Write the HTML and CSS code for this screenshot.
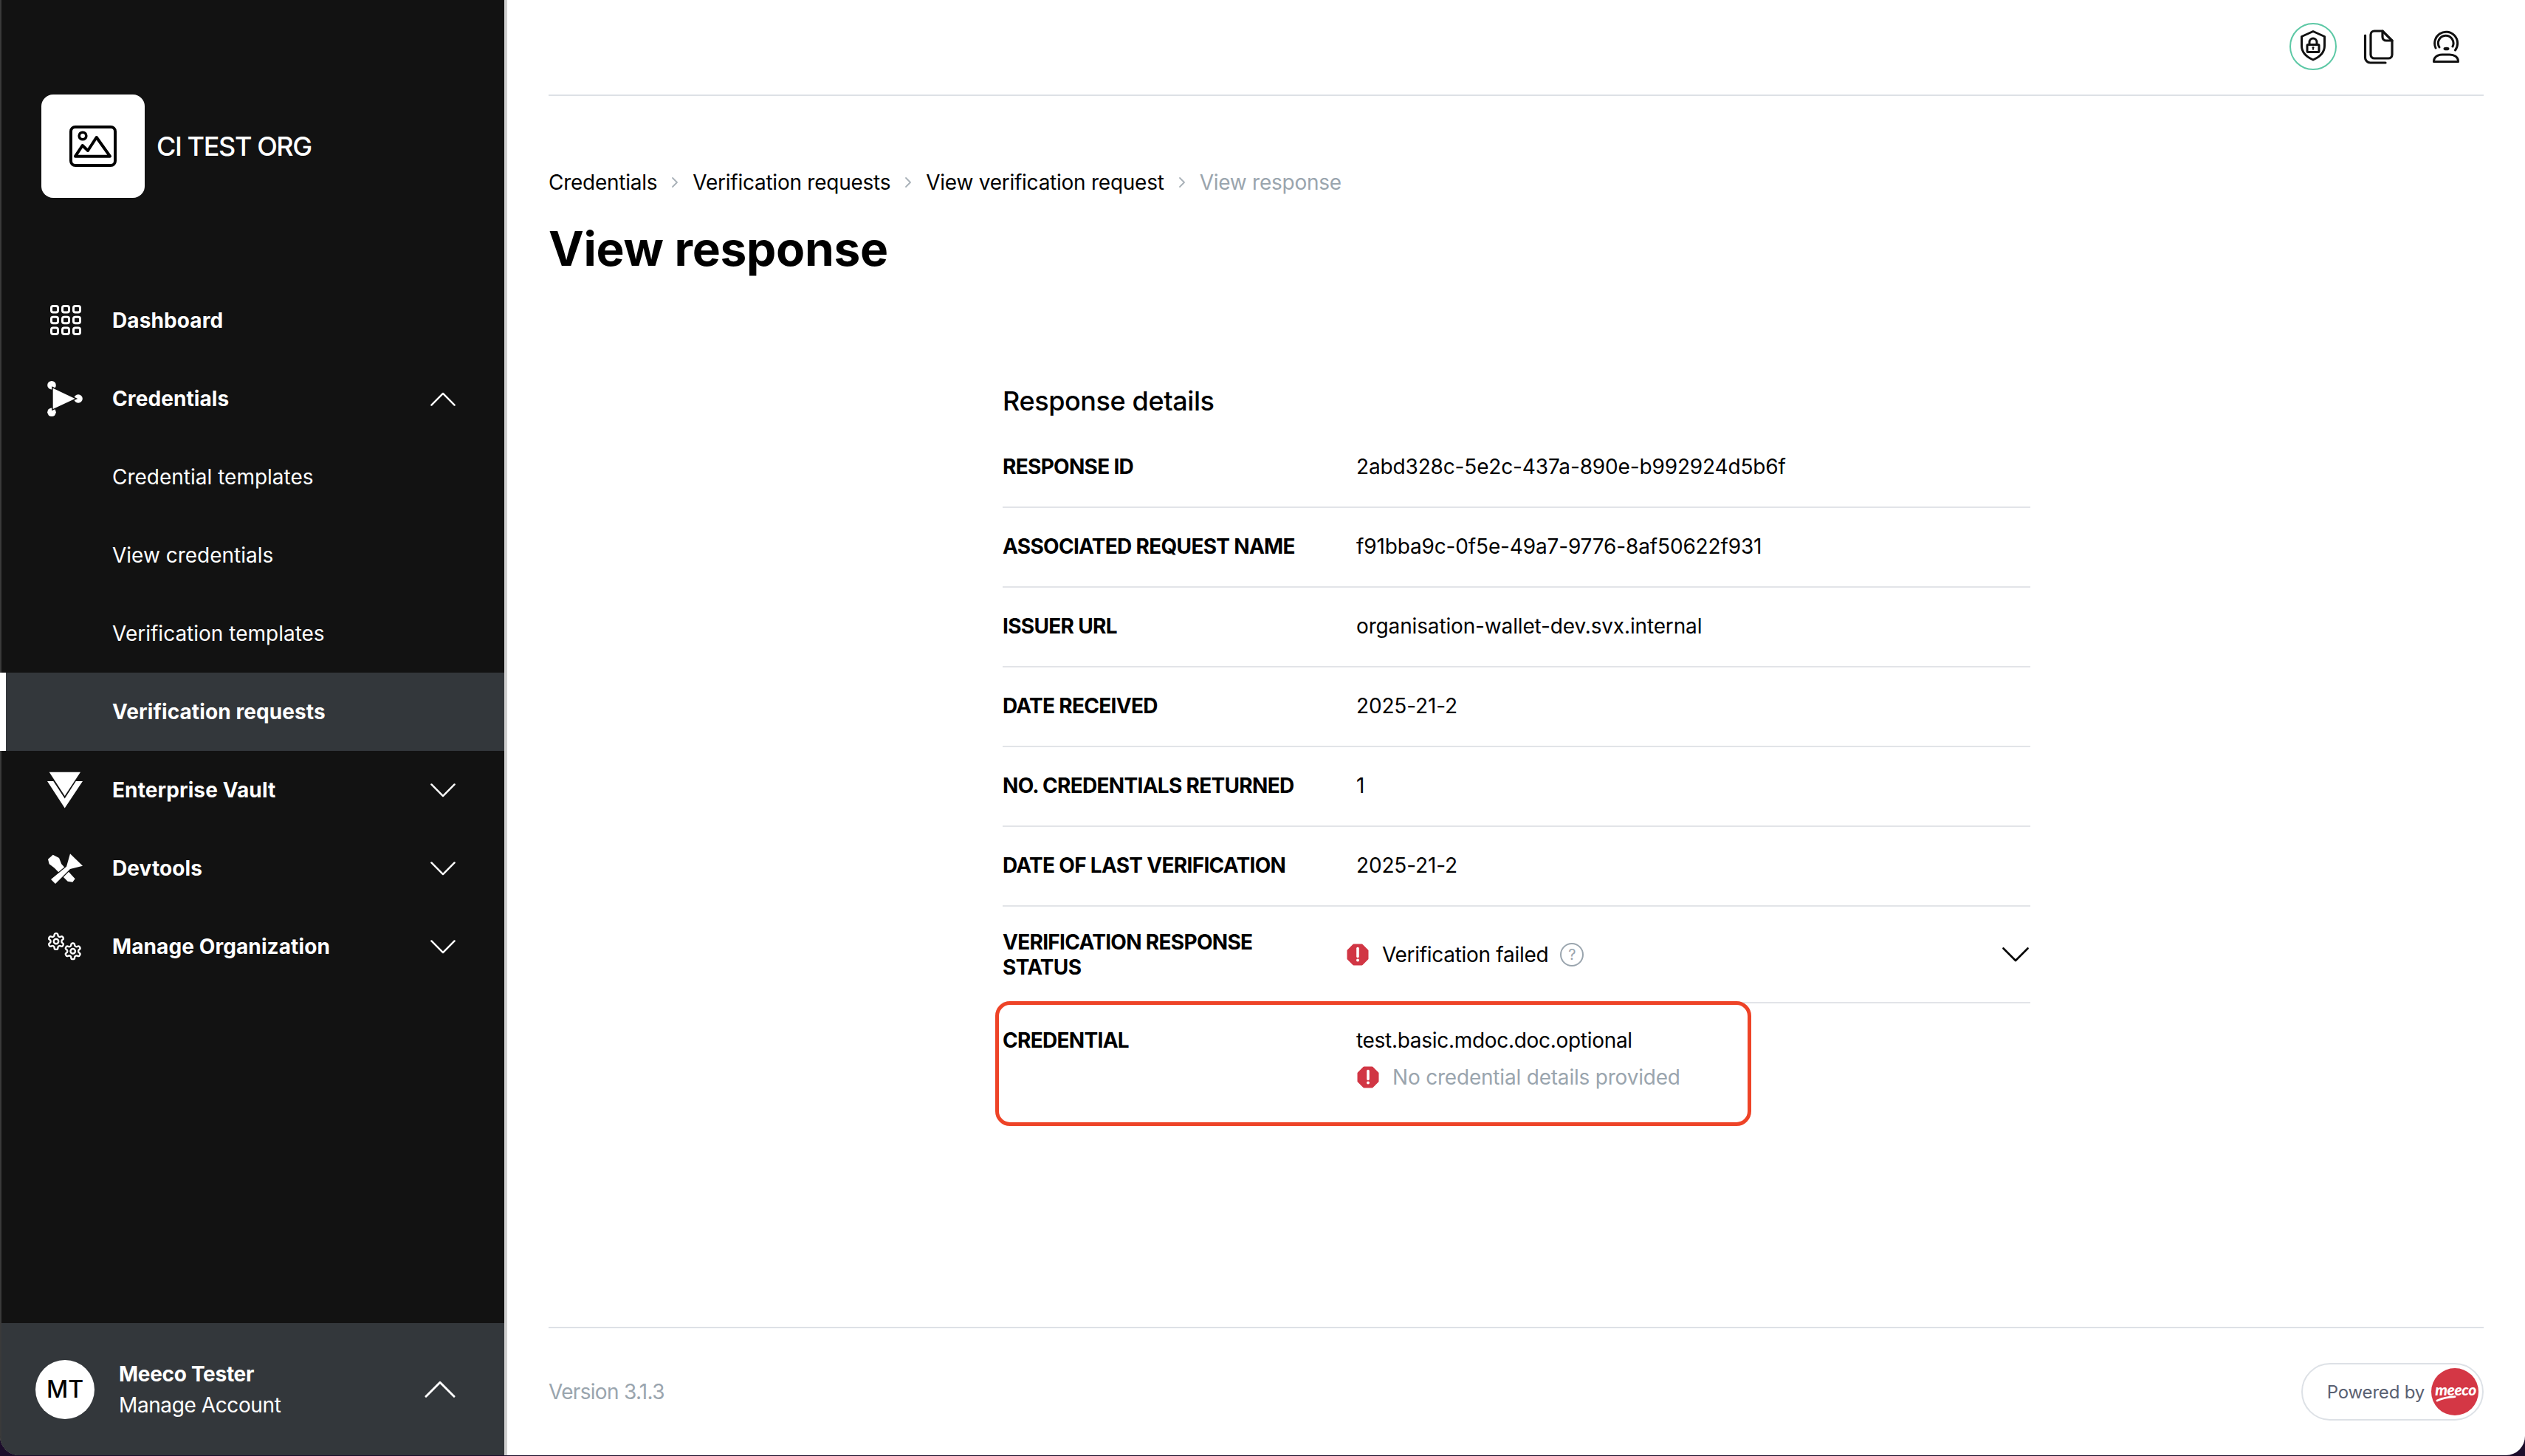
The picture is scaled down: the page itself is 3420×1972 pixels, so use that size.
FILE: index.html
```html
<!DOCTYPE html>
<html lang="en">
<head>
<meta charset="utf-8">
<title>View response</title>
<link rel="stylesheet" href="styles.css">
</head>
<body>
<svg class="defs" width="0" height="0" aria-hidden="true">
  <symbol id="chev-down" viewBox="0 0 36 20"><path d="M1.500 1.500 18 18 34.500 1.500" fill="none" stroke="currentColor" stroke-width="2.600" stroke-linecap="round" stroke-linejoin="round"/></symbol>
  <symbol id="chev-up" viewBox="0 0 36 20"><path d="M1.500 18.500 18 2 34.500 18.500" fill="none" stroke="currentColor" stroke-width="2.600" stroke-linecap="round" stroke-linejoin="round"/></symbol>
  <symbol id="crumb-chev" viewBox="0 0 10 16"><path d="M2 2 8 8 2 14" fill="none" stroke="currentColor" stroke-width="1.800" stroke-linecap="round" stroke-linejoin="round"/></symbol>
  <symbol id="err" viewBox="0 0 30 30"><path d="M9.500 2h11L28 9.500v11L20.500 28h-11L2 20.500v-11z" fill="#d13644" stroke="#d13644" stroke-width="3" stroke-linejoin="round"/><path d="M15 6.500v11" stroke="#fff" stroke-width="3.600" stroke-linecap="round"/><circle cx="15" cy="22.500" r="2" fill="#fff"/></symbol>
  <symbol id="gear" viewBox="0 0 24 24"><path d="M12.220 2h-.44a2 2 0 0 0-2 2v.18a2 2 0 0 1-1 1.730l-.43.250a2 2 0 0 1-2 0l-.15-.08a2 2 0 0 0-2.730.730l-.22.380a2 2 0 0 0 .73 2.730l.15.100a2 2 0 0 1 1 1.720v.510a2 2 0 0 1-1 1.740l-.15.090a2 2 0 0 0-.73 2.730l.22.380a2 2 0 0 0 2.730.730l.15-.08a2 2 0 0 1 2 0l.43.250a2 2 0 0 1 1 1.730V20a2 2 0 0 0 2 2h.44a2 2 0 0 0 2-2v-.18a2 2 0 0 1 1-1.730l.43-.25a2 2 0 0 1 2 0l.15.08a2 2 0 0 0 2.730-.73l.22-.39a2 2 0 0 0-.73-2.730l-.15-.08a2 2 0 0 1-1-1.740v-.5a2 2 0 0 1 1-1.740l.15-.09a2 2 0 0 0 .73-2.730l-.22-.38a2 2 0 0 0-2.730-.73l-.15.08a2 2 0 0 1-2 0l-.43-.25a2 2 0 0 1-1-1.730V4a2 2 0 0 0-2-2z" fill="none" stroke="currentColor" stroke-width="2.200"/><circle cx="12" cy="12" r="3" fill="none" stroke="currentColor" stroke-width="2.200"/></symbol>
</svg>

<div class="window">
  <aside class="sidebar">
    <div class="org">
      <div class="org-logo">
        <svg class="org-icon" viewBox="0 0 64 56"><rect x="2" y="2" width="60" height="52" rx="6" fill="none" stroke="#000" stroke-width="4"/><circle cx="18" cy="14" r="4.800" fill="none" stroke="#000" stroke-width="3.600"/><path d="M8 41.700 17.700 27 25 34 36.700 16 55 41.700z" fill="none" stroke="#000" stroke-width="4" stroke-linejoin="round"/></svg>
      </div>
      <span class="org-name">CI TEST ORG</span>
    </div>

    <nav class="nav">
      <a class="nav-row">
        <span class="nav-icon"><svg class="icon-grid" width="44" height="44" viewBox="0 0 44 44" fill="none" stroke="#fff" stroke-width="3"><rect x="2.500" y="2.500" width="9" height="8.500" rx="2.500"/><rect x="17.500" y="2.500" width="9" height="8.500" rx="2.500"/><rect x="32.500" y="2.500" width="9" height="8.500" rx="2.500"/><rect x="2.500" y="17.300" width="9" height="8.500" rx="2.500"/><rect x="17.500" y="17.300" width="9" height="8.500" rx="2.500"/><rect x="32.500" y="17.300" width="9" height="8.500" rx="2.500"/><rect x="2.500" y="32" width="9" height="8.500" rx="2.500"/><rect x="17.500" y="32" width="9" height="8.500" rx="2.500"/><rect x="32.500" y="32" width="9" height="8.500" rx="2.500"/></svg></span>
        <span class="nav-label strong">Dashboard</span>
      </a>
      <a class="nav-row">
        <span class="nav-icon"><svg width="48" height="50" viewBox="0 0 48 50"><circle cx="6" cy="6.700" r="5.800" fill="#fff"/><circle cx="42" cy="25" r="5.800" fill="#fff"/><circle cx="6" cy="43.300" r="5.800" fill="#fff"/><path d="M7.700 10.700 37.700 25 7.700 39z" fill="#fff" stroke="#121212" stroke-width="3" paint-order="stroke"/></svg></span>
        <span class="nav-label strong">Credentials</span>
        <svg class="nav-chev"><use href="#chev-up"/></svg>
      </a>
      <a class="nav-row"><span class="nav-icon"></span><span class="nav-label">Credential templates</span></a>
      <a class="nav-row"><span class="nav-icon"></span><span class="nav-label">View credentials</span></a>
      <a class="nav-row"><span class="nav-icon"></span><span class="nav-label">Verification templates</span></a>
      <a class="nav-row active"><span class="nav-icon"></span><span class="nav-label strong">Verification requests</span></a>
      <a class="nav-row">
        <span class="nav-icon"><svg width="48" height="50" viewBox="0 0 48 50" fill="#fff"><path d="M2.700.7H45L23.700 33z"/><path d="M0 13H8.300L23.700 36.500 38.800 13H48L23.700 49.500z"/></svg></span>
        <span class="nav-label strong">Enterprise Vault</span>
        <svg class="nav-chev"><use href="#chev-down"/></svg>
      </a>
      <a class="nav-row">
        <span class="nav-icon"><svg width="48" height="46" viewBox="0 0 48 46"><path d="M1 10.700 7.700 4.700 16 9 19.300 17.300 37.700 37.300 34.300 41.700 27.700 40.700 9.300 22.300 2.700 17.300z" fill="#fff"/><path d="M5 38 11 44 31 24 48 19.700 31 3.300 26 20.700z" fill="#fff" stroke="#121212" stroke-width="2.500" paint-order="stroke"/></svg></span>
        <span class="nav-label strong">Devtools</span>
        <svg class="nav-chev"><use href="#chev-down"/></svg>
      </a>
      <a class="nav-row">
        <span class="nav-icon"><svg class="icon-gears" width="52" height="42" viewBox="0 0 52 42" color="#fff"><use href="#gear" x="1" y="1" width="26" height="26"/><use href="#gear" x="23.700" y="14.300" width="26" height="26"/></svg></span>
        <span class="nav-label strong">Manage Organization</span>
        <svg class="nav-chev"><use href="#chev-down"/></svg>
      </a>
    </nav>

    <div class="account">
      <div class="avatar">MT</div>
      <div class="account-text">
        <span class="account-name">Meeco Tester</span>
        <span class="account-link">Manage Account</span>
      </div>
      <svg class="account-chev"><use href="#chev-up"/></svg>
    </div>
  </aside>

  <main class="main">
    <header class="topbar">
      <span class="top-shield">
        <svg width="64" height="64" viewBox="0 0 64 64" fill="none" stroke="#111" stroke-width="3" stroke-linejoin="round"><path d="M32 11.500 47.500 18.500V31C47.500 41 40 46.500 32 50 24 46.500 16.500 41 16.500 31V18.500z"/><rect x="24" y="29.500" width="16" height="10" rx="1"/><path d="M27 29.500V26a5 5 0 0 1 10 0v3.500"/><circle cx="32" cy="33.500" r="1.500" fill="#111" stroke="none"/><path d="M32 34v3" stroke-width="1.500"/></svg>
      </span>
      <svg class="top-docs" width="44" height="50" viewBox="0 0 44 50" fill="none" stroke="#111" stroke-width="3.200" stroke-linecap="round" stroke-linejoin="round"><path d="M16 4H27L40 17V36a5 5 0 0 1-5 5H16a5 5 0 0 1-5-5V9a5 5 0 0 1 5-5z"/><path d="M27 4v8a5 5 0 0 0 5 5h8"/><path d="M3.500 10V40a7 7 0 0 0 7 7H31"/></svg>
      <svg class="top-support" width="46" height="50" viewBox="0 0 46 50" fill="none" stroke="#111" stroke-width="3" stroke-linecap="round" stroke-linejoin="round"><path d="M9 27A15.500 15.500 0 1 1 35.500 30"/><path d="M14 26A10.300 10.300 0 1 1 32 25"/><ellipse cx="23.500" cy="28" rx="4" ry="2.300" fill="#111" stroke="none"/><path d="M6.500 45.500C6.500 39 12 36 18 36H28C34 36 39.500 39 39.500 45.500z"/></svg>
    </header>

    <nav class="crumbs">
      <a class="crumb">Credentials</a>
      <svg class="crumb-sep"><use href="#crumb-chev"/></svg>
      <a class="crumb">Verification requests</a>
      <svg class="crumb-sep"><use href="#crumb-chev"/></svg>
      <a class="crumb">View verification request</a>
      <svg class="crumb-sep"><use href="#crumb-chev"/></svg>
      <span class="crumb current">View response</span>
    </nav>

    <h1 class="title">View response</h1>

    <section class="details">
      <h2 class="details-title">Response details</h2>
      <div class="row"><div class="label">RESPONSE ID</div><div class="value">2abd328c-5e2c-437a-890e-b992924d5b6f</div></div>
      <div class="row"><div class="label">ASSOCIATED REQUEST NAME</div><div class="value">f91bba9c-0f5e-49a7-9776-8af50622f931</div></div>
      <div class="row"><div class="label">ISSUER URL</div><div class="value">organisation-wallet-dev.svx.internal</div></div>
      <div class="row"><div class="label">DATE RECEIVED</div><div class="value">2025-21-2</div></div>
      <div class="row"><div class="label">NO. CREDENTIALS RETURNED</div><div class="value">1</div></div>
      <div class="row"><div class="label">DATE OF LAST VERIFICATION</div><div class="value">2025-21-2</div></div>
      <div class="row row-status">
        <div class="label">VERIFICATION RESPONSE STATUS</div>
        <div class="status">
          <svg class="err"><use href="#err"/></svg>
          <span class="status-text">Verification failed</span>
          <span class="help">?</span>
          <svg class="status-chev"><use href="#chev-down"/></svg>
        </div>
      </div>
      <div class="row-credential">
        <div class="label">CREDENTIAL</div>
        <div class="cred-value">
          <div class="cred-name">test.basic.mdoc.doc.optional</div>
          <div class="cred-note"><svg class="err"><use href="#err"/></svg><span class="note-text">No credential details provided</span></div>
        </div>
        <div class="highlight"></div>
      </div>
    </section>

    <footer class="footer">
      <span class="version">Version 3.1.3</span>
      <span class="powered">
        <span class="powered-text">Powered by</span>
        <svg class="meeco" width="64" height="64" viewBox="0 0 64 64"><circle cx="32" cy="32" r="32" fill="#d43745"/><text x="33" y="37" text-anchor="middle" class="meeco-text">meeco</text><path d="M8 44C18 39 28 39 32 38.700" fill="none" stroke="#fff" stroke-width="2.800" stroke-linecap="round"/></svg>
      </span>
    </footer>
  </main>
</div>
</body>
</html>
```

FILE: styles.css
```css
* { box-sizing: border-box; }
html, body { margin: 0; padding: 0; }
body {
  width: 3420px;
  height: 1972px;
  background: #1c0d2b;
  font-family: "Inter", "Liberation Sans", sans-serif;
  color: #000;
  overflow: hidden;
}
.defs { position: absolute; }
.window {
  display: flex;
  width: 3420px;
  height: 1971px;
  background: #fff;
  border-radius: 0 0 26px 26px;
  overflow: hidden;
}

/* sidebar */
.sidebar {
  display: flex;
  flex-direction: column;
  flex: 0 0 687px;
  background: #121212;
  border-left: 2px solid #3a3a3a;
  border-right: 4px solid #cfcfcf;
  color: #fff;
}
.org {
  display: flex;
  align-items: center;
  gap: 16px;
  padding: 128px 0 0 54px;
}
.org-logo {
  display: flex;
  align-items: center;
  justify-content: center;
  width: 140px;
  height: 140px;
  background: #fff;
  border-radius: 16px;
}
.org-icon { width: 64px; height: 56px; }
.org-name { font-size: 36px; font-weight: 500; letter-spacing: -1.4px; }
.nav { margin-top: 113px; display: flex; flex-direction: column; }
.nav-row {
  display: flex;
  align-items: center;
  height: 106px;
  padding-left: 62px;
}
.nav-icon {
  display: flex;
  align-items: center;
  flex: 0 0 88px;
}
.icon-grid { margin-left: 3px; }
.icon-gears { margin-left: -2px; }
.nav-label { font-size: 28px; letter-spacing: 0; }
.nav-label.strong { font-weight: 700; letter-spacing: 0.1px; }
.nav-chev {
  width: 34px;
  height: 19px;
  margin-left: auto;
  margin-right: 66px;
}
.active {
  background: #33373b;
  margin-left: -2px;
  padding-left: 64px;
  border-left: 8px solid #fff;
}
.active .nav-icon { flex-basis: 80px; }
.account {
  display: flex;
  align-items: center;
  margin-top: auto;
  height: 179px;
  padding: 0 66px 0 46px;
  background: #33373b;
}
.avatar {
  display: flex;
  align-items: center;
  justify-content: center;
  width: 80px;
  height: 80px;
  border-radius: 50%;
  background: #fff;
  color: #000;
  font-size: 32px;
  font-weight: 500;
}
.account-text {
  display: flex;
  flex-direction: column;
  gap: 8px;
  margin-left: 33px;
}
.account-name { font-size: 28px; font-weight: 700; line-height: 34px; letter-spacing: -0.3px; }
.account-link { font-size: 28px; line-height: 34px; letter-spacing: -0.4px; }
.account-chev { width: 42px; height: 23px; margin-left: auto; }

/* main */
.main {
  display: flex;
  flex-direction: column;
  flex: 1;
  padding: 0 56px;
}
.topbar {
  display: flex;
  align-items: center;
  justify-content: flex-end;
  height: 130px;
  border-bottom: 2px solid #dde1e6;
  padding: 0 28px 3px 0;
}
.top-shield {
  display: flex;
  width: 64px;
  height: 64px;
  border: 2.5px solid #5cc8a5;
  border-radius: 50%;
  align-items: center;
  justify-content: center;
}
.top-shield svg { flex: none; }
.top-docs { margin-left: 35px; }
.top-support { margin-left: 46px; }
.crumbs {
  display: flex;
  align-items: center;
  height: 40px;
  margin-top: 97px;
  font-size: 28px;
  letter-spacing: -0.25px;
}
.crumb-sep { width: 10px; height: 16px; color: #a9b1b8; margin: 0 19px; }
.current { color: #9aa5ae; }
.title {
  margin: 32px 0 0;
  font-size: 64px;
  line-height: 76px;
  font-weight: 700;
  letter-spacing: -0.3px;
}
.details {
  width: 1392px;
  margin: 146px 0 0 615px;
}
.details-title {
  margin: 0;
  font-size: 36px;
  line-height: 44px;
  font-weight: 500;
  height: 59px;
  letter-spacing: -0.4px;
}
.row {
  display: grid;
  grid-template-columns: 479px 1fr;
  align-items: center;
  height: 108px;
  padding-bottom: 2px;
  border-bottom: 2px solid #e2e4e8;
  font-size: 28px;
}
.label { font-weight: 700; line-height: 34px; letter-spacing: -0.7px; }
.value { letter-spacing: -0.15px; }
.row-status { height: 131px; grid-template-columns: 466px 1fr; padding-bottom: 0; }
.row-status .label { width: 400px; }
.status { display: flex; align-items: center; }
.err { width: 30px; height: 30px; flex: none; }
.status-text { margin-left: 18px; letter-spacing: -0.3px; }
.help {
  display: flex;
  align-items: center;
  justify-content: center;
  width: 32px;
  height: 32px;
  margin-left: 16px;
  border: 2px solid #9aa5ae;
  border-radius: 50%;
  color: #9aa5ae;
  font-size: 20px;
}
.status-chev { width: 36px; height: 20px; margin-left: auto; margin-right: 2px; }
.row-credential {
  position: relative;
  display: grid;
  grid-template-columns: 479px 1fr;
  height: 166px;
  padding-top: 33px;
  font-size: 28px;
}
.cred-name { line-height: 34px; letter-spacing: -0.3px; }
.cred-note {
  display: flex;
  align-items: center;
  gap: 18px;
  margin: 16px 0 0 1px;
  color: #9aa5ae;
  letter-spacing: -0.2px;
}
.highlight {
  position: absolute;
  left: -10px;
  top: -3px;
  width: 1024px;
  height: 169px;
  border: 5px solid #ee4327;
  border-radius: 20px;
}
.footer {
  display: flex;
  align-items: center;
  justify-content: space-between;
  margin-top: auto;
  height: 174px;
  border-top: 2px solid #dde1e6;
}
.version { font-size: 28px; color: #9aa5ae; letter-spacing: -0.7px; }
.powered {
  display: flex;
  align-items: center;
  gap: 9px;
  height: 78px;
  padding: 0 5px 0 33px;
  border: 2px solid #dde1e6;
  border-radius: 39px;
}
.powered-text { font-size: 24px; color: #5a6172; letter-spacing: -0.2px; }
.meeco { flex: none; }
.meeco-text { font: italic 900 21px "Lato", sans-serif; fill: #fff; letter-spacing: -0.4px; }
```
